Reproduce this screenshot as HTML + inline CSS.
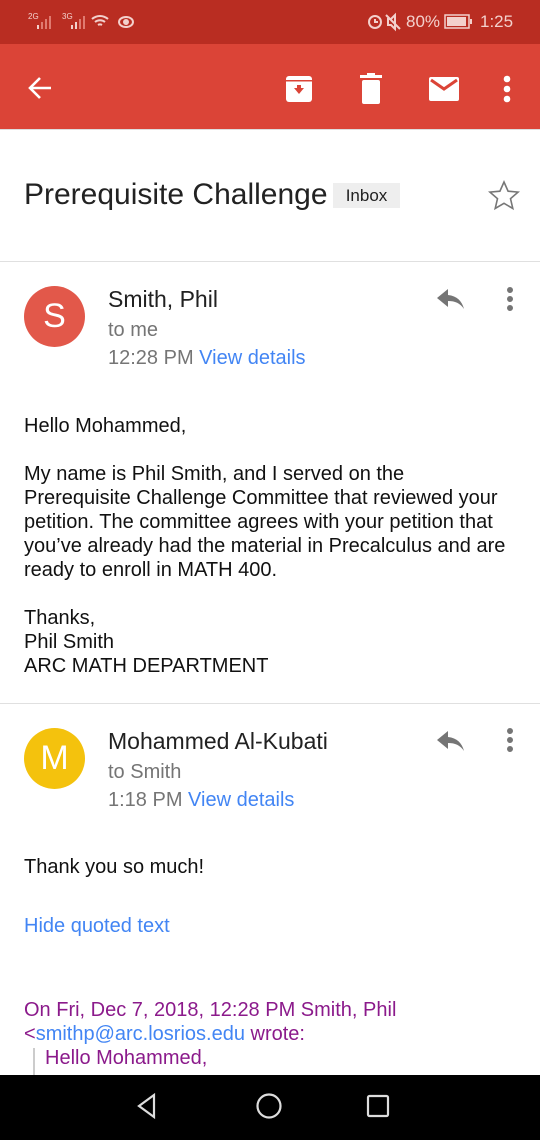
<!DOCTYPE html>
<html><head><meta charset="utf-8"><style>
*{margin:0;padding:0;box-sizing:border-box}
body{width:540px;height:1140px;position:relative;overflow:hidden;background:#fff;font-family:"Liberation Sans",sans-serif;color:#212121}
.a{position:absolute;white-space:nowrap}
.sb{position:absolute;left:0;top:0;width:540px;height:44px;background:#b92d22;color:#f3d0cc}
.tb{position:absolute;left:0;top:44px;width:540px;height:85px;background:#db4437}
.hr{position:absolute;left:0;width:540px;height:1px;background:#e0e0e0}
.av{position:absolute;width:61px;height:61px;border-radius:50%;color:#fff;font-size:34px;text-align:center;line-height:61px}
.nm{font-size:23px;color:#212121}
.gr{font-size:20px;color:#757575}
.body{font-size:20px;line-height:24px;color:#111}
.pu{color:#8b1a8b}
.bl{color:#4285f4}
</style></head><body>
<div class="sb">
 <div class="a" style="left:28px;top:12px;font-size:8px">2G</div>
 <div class="a" style="left:62px;top:12px;font-size:8px">3G</div>
 <svg class="a" style="left:36px;top:13px" width="20" height="18"><rect x="1" y="12" width="2" height="4" fill="#f3d0cc"/><rect x="5" y="9" width="2" height="7" fill="#e07a70"/><rect x="9" y="6" width="2" height="10" fill="#e07a70"/><rect x="13" y="3" width="2" height="13" fill="#e07a70"/></svg>
 <svg class="a" style="left:70px;top:13px" width="20" height="18"><rect x="1" y="12" width="2" height="4" fill="#f3d0cc"/><rect x="5" y="9" width="2" height="7" fill="#f3d0cc"/><rect x="9" y="6" width="2" height="10" fill="#e07a70"/><rect x="13" y="3" width="2" height="13" fill="#e07a70"/></svg>
 <svg class="a" style="left:90px;top:12px" width="44" height="20" fill="none" stroke="#f3d0cc" stroke-width="2"><path d="M2 7a12 12 0 0 1 16 0M5 10a8 8 0 0 1 10 0M8 13a4 4 0 0 1 4 0"/><ellipse cx="36" cy="10" rx="7" ry="5"/><circle cx="36" cy="10" r="2" fill="#f3d0cc"/></svg>
 <svg class="a" style="left:366px;top:12px" width="40" height="20" fill="none" stroke="#f3d0cc" stroke-width="2"><circle cx="9" cy="10" r="6"/><path d="M9 7v3h3M22 7h3l4-4v14l-4-4h-3zM20 3l14 14"/></svg>
 <div class="a" style="left:406px;top:12px;font-size:17px">80%</div>
 <svg class="a" style="left:444px;top:14px" width="30" height="16"><rect x="1" y="1" width="24" height="13" fill="none" stroke="#f3d0cc" stroke-width="1.5"/><rect x="3" y="3" width="19" height="9" fill="#f3d0cc"/><rect x="26" y="5" width="2" height="5" fill="#f3d0cc"/></svg>
 <div class="a" style="left:480px;top:12px;font-size:17px">1:25</div>
</div>
<div class="tb">
 <svg class="a" style="left:26px;top:30px" width="28" height="28" fill="none" stroke="#fff" stroke-width="2.6"><path d="M25 14H4M14 4L4 14l10 10"/></svg>
 <svg class="a" style="left:284px;top:30px" width="30" height="30"><rect x="2" y="2" width="26" height="26" rx="3" fill="#fff"/><rect x="2" y="6" width="26" height="1.5" fill="#db4437"/><path d="M10 14h10l-5 6z M13 11h4v4h-4z" fill="#db4437"/></svg>
 <svg class="a" style="left:358px;top:29px" width="26" height="32" fill="#fff"><rect x="2" y="2" width="22" height="3"/><rect x="9" y="0" width="8" height="3"/><rect x="4" y="7" width="18" height="24" rx="2"/></svg>
 <svg class="a" style="left:428px;top:32px" width="32" height="26"><rect x="1" y="1" width="30" height="24" rx="2" fill="#fff"/><path d="M3 4l13 9 13-9" fill="none" stroke="#db4437" stroke-width="3"/></svg>
 <svg class="a" style="left:500px;top:30px" width="14" height="30" fill="#fff"><circle cx="7" cy="5" r="3.3"/><circle cx="7" cy="15" r="3.3"/><circle cx="7" cy="25" r="3.3"/></svg>
</div>
<div class="hr" style="top:129px;background:#ddd"></div>

<div class="a" style="left:24px;top:178px;font-size:30px;color:#222">Prerequisite Challenge</div>
<div class="a" style="left:333px;top:183px;width:67px;height:25px;background:#eee;font-size:17px;line-height:25px;text-align:center;color:#222">Inbox</div>
<svg class="a" style="left:488px;top:180px" width="32" height="32" fill="none" stroke="#777" stroke-width="1.6"><path d="M16 2l4.1 9.2 10 .9-7.6 6.6 2.3 9.8L16 23.3l-8.8 5.2 2.3-9.8L1.9 12.1l10-.9z"/></svg>
<div class="hr" style="top:261px"></div>

<div class="av" style="left:24px;top:286px;background:#e2584a">S</div>
<div class="a nm" style="left:108px;top:286px">Smith, Phil</div>
<div class="a gr" style="left:108px;top:319px">to me</div>
<div class="a gr" style="left:108px;top:347px">12:28 PM <span class="bl">View details</span></div>
<svg class="a" style="left:436px;top:286px" width="30" height="24"><path d="M12 3L1 12l11 9v-6c7 0 12 2 16 8-2-8-7-13-16-14z" fill="#757575"/></svg>
<svg class="a" style="left:503px;top:286px" width="14" height="28" fill="#757575"><circle cx="7" cy="4" r="3"/><circle cx="7" cy="13" r="3"/><circle cx="7" cy="22" r="3"/></svg>

<div class="a body" style="left:24px;top:414px">Hello Mohammed,<br><br>My name is Phil Smith, and I served on the<br>Prerequisite Challenge Committee that reviewed your<br>petition. The committee agrees with your petition that<br>you’ve already had the material in Precalculus and are<br>ready to enroll in MATH 400.<br><br>Thanks,<br>Phil Smith<br>ARC MATH DEPARTMENT</div>
<div class="hr" style="top:703px"></div>

<div class="av" style="left:24px;top:728px;background:#f4c20d">M</div>
<div class="a nm" style="left:108px;top:728px">Mohammed Al-Kubati</div>
<div class="a gr" style="left:108px;top:761px">to Smith</div>
<div class="a gr" style="left:108px;top:789px">1:18 PM <span class="bl">View details</span></div>
<svg class="a" style="left:436px;top:728px" width="30" height="24"><path d="M12 3L1 12l11 9v-6c7 0 12 2 16 8-2-8-7-13-16-14z" fill="#757575"/></svg>
<svg class="a" style="left:503px;top:727px" width="14" height="28" fill="#757575"><circle cx="7" cy="4" r="3"/><circle cx="7" cy="13" r="3"/><circle cx="7" cy="22" r="3"/></svg>

<div class="a body" style="left:24px;top:855px">Thank you so much!</div>
<div class="a body bl" style="left:24px;top:914px">Hide quoted text</div>
<div class="a body pu" style="left:24px;top:998px">On Fri, Dec 7, 2018, 12:28 PM Smith, Phil<br>&lt;<span class="bl">smithp@arc.losrios.edu</span> wrote:</div>
<div class="a" style="left:33px;top:1048px;width:2px;height:30px;background:#ccc"></div>
<div class="a body pu" style="left:45px;top:1046px">Hello Mohammed,</div>

<div class="a" style="left:0;top:1075px;width:540px;height:65px;background:#000"></div>
<svg class="a" style="left:130px;top:1090px" width="280" height="34" fill="none" stroke="#ddd" stroke-width="2.2"><path d="M24 5L9 16l15 11z"/><circle cx="139" cy="16" r="11.5"/><rect x="238" y="6" width="20" height="20" rx="1.5"/></svg>
</body></html>
